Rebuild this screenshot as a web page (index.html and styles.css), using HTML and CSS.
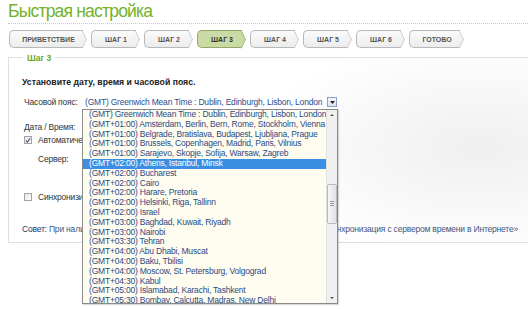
FILE: index.html
```html
<!DOCTYPE html>
<html lang="ru">
<head>
    <meta charset="UTF-8" />
    <title>Быстрая настройка</title>
    <link rel="stylesheet" href="styles.css">
</head>
<body>

    <h1 class="title">Быстрая настройка</h1>

    <div class="steps">
        <span class="step step-first">ПРИВЕТСТВИЕ</span>
        <span class="step">ШАГ 1</span>
        <span class="step">ШАГ 2</span>
        <span class="step active">ШАГ 3</span>
        <span class="step">ШАГ 4</span>
        <span class="step">ШАГ 5</span>
        <span class="step">ШАГ 6</span>
        <span class="step step-last">ГОТОВО</span>
    </div>

    <div class="panel">
        <span class="legend">Шаг 3</span>

        <p class="lead">Установите дату, время и часовой пояс.</p>

        <div class="tz-row">
            <span class="label">Часовой пояс:</span>
            <div class="select">
                <span class="select-value">(GMT) Greenwich Mean Time : Dublin, Edinburgh, Lisbon, London</span>
                <span class="select-btn">
                    <svg width="5" height="3" viewBox="0 0 5 3"><path d="M0 0h5L2.5 3z" fill="#222"/></svg>
                </span>

                <div class="dropdown">
                    <ul class="options">
                        <li>(GMT) Greenwich Mean Time : Dublin, Edinburgh, Lisbon, London</li>
                        <li>(GMT+01:00) Amsterdam, Berlin, Bern, Rome, Stockholm, Vienna</li>
                        <li>(GMT+01:00) Belgrade, Bratislava, Budapest, Ljubljana, Prague</li>
                        <li>(GMT+01:00) Brussels, Copenhagen, Madrid, Paris, Vilnius</li>
                        <li>(GMT+01:00) Sarajevo, Skopje, Sofija, Warsaw, Zagreb</li>
                        <li class="selected">(GMT+02:00) Athens, Istanbul, Minsk</li>
                        <li>(GMT+02:00) Bucharest</li>
                        <li>(GMT+02:00) Cairo</li>
                        <li>(GMT+02:00) Harare, Pretoria</li>
                        <li>(GMT+02:00) Helsinki, Riga, Tallinn</li>
                        <li>(GMT+02:00) Israel</li>
                        <li>(GMT+03:00) Baghdad, Kuwait, Riyadh</li>
                        <li>(GMT+03:00) Nairobi</li>
                        <li>(GMT+03:30) Tehran</li>
                        <li>(GMT+04:00) Abu Dhabi, Muscat</li>
                        <li>(GMT+04:00) Baku, Tbilisi</li>
                        <li>(GMT+04:00) Moscow, St. Petersburg, Volgograd</li>
                        <li>(GMT+04:30) Kabul</li>
                        <li>(GMT+05:00) Islamabad, Karachi, Tashkent</li>
                        <li>(GMT+05:30) Bombay, Calcutta, Madras, New Delhi</li>
                    </ul>
                    <div class="scrollbar">
                        <span class="arrow-up"></span>
                        <span class="thumb"><span class="grip"></span></span>
                        <span class="arrow-down"></span>
                    </div>
                </div>
            </div>
        </div>

        <div class="label date-label">Дата / Время:</div>

        <div class="check-row">
            <span class="box">
                <svg width="7" height="7" viewBox="0 0 7 7"><path d="M1 3.5l1.8 2L6 1" fill="none" stroke="#3b4a6b" stroke-width="1.3"/></svg>
            </span>
            <span class="cut">Автоматически получать дату и время</span>
        </div>

        <div class="server-row">Сервер:</div>

        <div class="check-row sync-row">
            <span class="box"></span>
            <span class="cut">Синхронизировать время с сервером в Интернете</span>
        </div>

        <div class="tip">
            <span class="tip-start"><span class="tip-key">Совет:</span> При наличии подключения к Интернету</span>
            <span class="tip-end"><span>отметьте «Синхронизация с сервером времени в Интернете»</span></span>
        </div>
    </div>

</body>
</html>
```

FILE: styles.css
```css
body {
    margin: 0;
    padding: 0 0 0 8px;
    min-height: 309px;
    font-family: "Liberation Sans", Arial, sans-serif;
    font-size: 8.5px;
    letter-spacing: -0.2px;
    color: #333;
    background: #fff;
}

.title {
    margin: 0;
    padding-top: 2px;
    height: 21px;
    font-size: 17.5px;
    line-height: 19px;
    font-weight: normal;
    letter-spacing: -0.8px;
    color: #72b22c;
    border-bottom: 1px dotted #c9c9c9;
}

.steps {
    display: flex;
    gap: 8px;
    margin-top: 6px;
    padding-left: 1px;
}

.step {
    position: relative;
    box-sizing: border-box;
    width: 45px;
    height: 18px;
    padding-left: 4px;
    display: flex;
    align-items: center;
    justify-content: center;
    font-size: 7px;
    font-weight: bold;
    letter-spacing: 0;
    color: #555;
    background: linear-gradient(#fbfbfb, #ececec);
    border: 1px solid #b8b8b8;
    border-right: 0;
    border-radius: 5px 0 0 5px;
}

.step::after {
    content: '';
    position: absolute;
    right: -6px;
    top: 2px;
    width: 12px;
    height: 12px;
    background: linear-gradient(135deg, #f7f7f7, #ededed);
    border-top: 1px solid #b8b8b8;
    border-right: 1px solid #b8b8b8;
    transform: scaleX(0.45) rotate(45deg);
}

.step-first {
    width: 74px;
}

.step-last {
    width: 51px;
}

.step.active {
    background: #c9daa4;
    border-color: #93a867;
    color: #333;
}

.step.active::after {
    background: #c9daa4;
    border-color: #93a867;
}

.panel {
    position: relative;
    margin-top: 9px;
    padding: 18px 0 7px 13px;
    border: 1px solid #e0e0e0;
    border-right: 0;
    background: radial-gradient(ellipse 230px 110px at 470px 90px, #efefef, rgba(255, 255, 255, 0));
}

.legend {
    position: absolute;
    left: 14px;
    top: -6px;
    padding: 0 4px;
    background: #fff;
    font-size: 8.7px;
    line-height: 12px;
    font-weight: bold;
    letter-spacing: 0;
    color: #6aa822;
}

.lead {
    margin: 0;
    line-height: 12px;
    font-size: 8.7px;
    font-weight: bold;
    letter-spacing: 0;
    color: #222;
}

.tz-row {
    display: flex;
    align-items: center;
    margin-top: 7px;
    padding-left: 2px;
}

.label {
    color: #333;
}

.tz-row .label {
    width: 58px;
}

.select {
    position: relative;
    box-sizing: border-box;
    width: 256px;
    height: 14px;
    display: flex;
    align-items: center;
    padding-left: 3px;
    color: #2c4f8c;
}

.select-value {
    white-space: nowrap;
}

.select-btn {
    position: absolute;
    right: 1px;
    top: 2px;
    box-sizing: border-box;
    width: 10px;
    height: 10px;
    display: flex;
    align-items: center;
    justify-content: center;
    border: 1px solid #8da2c2;
    background: linear-gradient(#f4f7fb, #dce4ef);
}

.dropdown {
    position: absolute;
    left: 0;
    top: 14px;
    box-sizing: border-box;
    width: 256px;
    height: 195px;
    display: flex;
    background: #fffdf0;
    border: 1px solid #8a8a8a;
    box-shadow: 1px 1px 1px rgba(0, 0, 0, 0.15);
    overflow: hidden;
    z-index: 2;
}

.options {
    flex: 1;
    min-width: 0;
    margin: 0;
    padding: 0;
    list-style: none;
    color: #2a4a86;
}

.options li {
    height: 9.8px;
    line-height: 9.8px;
    padding-left: 6px;
    white-space: nowrap;
    overflow: hidden;
}

.options li.selected {
    background: #3a8fe4;
    color: #fff;
}

.scrollbar {
    position: relative;
    width: 10px;
    flex-shrink: 0;
    background: #f0f0f0;
    border-left: 1px solid #e2e2e2;
}

.arrow-up,
.arrow-down {
    position: absolute;
    left: 3px;
    width: 0;
    height: 0;
    border-left: 2px solid transparent;
    border-right: 2px solid transparent;
}

.arrow-up {
    top: 4px;
    border-bottom: 2px solid #555;
}

.arrow-down {
    bottom: 4px;
    border-top: 2px solid #555;
}

.thumb {
    position: absolute;
    left: 0;
    top: 74px;
    box-sizing: border-box;
    width: 10px;
    height: 40px;
    border: 1px solid #b9b9b9;
    border-radius: 2px;
    background: linear-gradient(90deg, #f6f6f6, #e1e1e1);
}

.grip {
    position: absolute;
    left: 2px;
    top: 16px;
    width: 4px;
    height: 5px;
    border-top: 1px solid #999;
    border-bottom: 1px solid #999;
    box-sizing: border-box;
    background: linear-gradient(#999, #999) center / 4px 1px no-repeat;
}

.date-label {
    margin-top: 12px;
    padding-left: 2px;
    line-height: 12px;
}

.check-row {
    display: flex;
    align-items: center;
    gap: 6px;
    margin-top: 1px;
    padding-left: 2px;
    line-height: 12px;
    white-space: nowrap;
}

.cut {
    width: 44px;
    overflow: hidden;
}

.box {
    box-sizing: border-box;
    width: 8px;
    height: 8px;
    display: flex;
    align-items: center;
    justify-content: center;
    border: 1px solid #a3a3a3;
    background: linear-gradient(135deg, #e4e4e4, #fdfdfd);
}

.server-row {
    margin-top: 7px;
    padding-left: 16px;
    line-height: 12px;
}

.sync-row {
    margin-top: 26px;
}

.tip {
    display: flex;
    margin-top: 20px;
    line-height: 12px;
    color: #3b5785;
    white-space: nowrap;
}

.tip-start {
    width: 60px;
    overflow: hidden;
}

.tip-key {
    color: #1e3566;
}

.tip-end {
    display: flex;
    justify-content: flex-end;
    width: 180px;
    margin-left: 256px;
    overflow: hidden;
}
```
